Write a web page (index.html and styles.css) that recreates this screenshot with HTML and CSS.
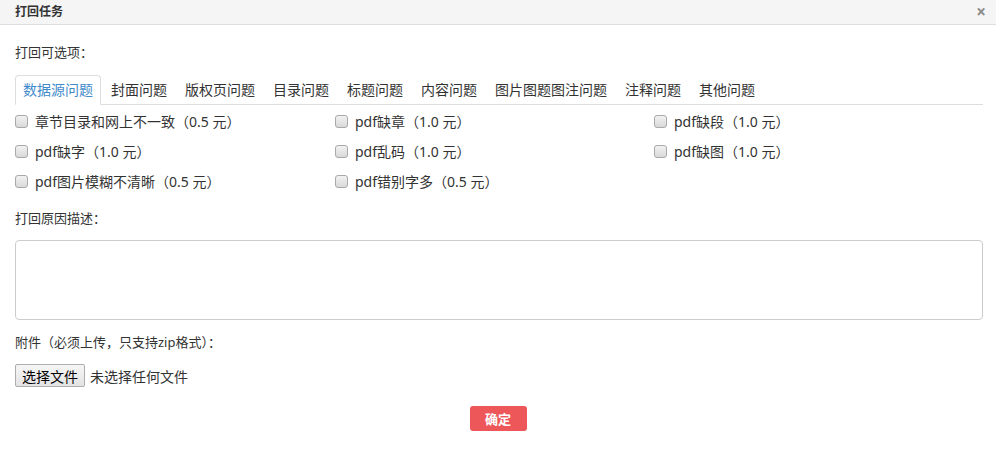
FILE: index.html
```html
<!DOCTYPE html>
<html lang="zh-CN">
<head>
<meta charset="utf-8">
<title>打回任务</title>
<link rel="stylesheet" href="styles.css">
</head>
<body>
<div class="dialog">
  <div class="dlg-head">
    <span class="dlg-title">打回任务</span>
    <span class="dlg-close">×</span>
  </div>
  <div class="dlg-body">
    <div class="label first">打回可选项：</div>
    <ul class="tabs">
      <li class="tab active">数据源问题</li>
      <li class="tab">封面问题</li>
      <li class="tab">版权页问题</li>
      <li class="tab">目录问题</li>
      <li class="tab">标题问题</li>
      <li class="tab">内容问题</li>
      <li class="tab">图片图题图注问题</li>
      <li class="tab">注释问题</li>
      <li class="tab">其他问题</li>
    </ul>
    <div class="opts">
      <label class="opt"><input type="checkbox" class="cb">章节目录和网上不一致（0.5 元）</label>
      <label class="opt"><input type="checkbox" class="cb">pdf缺章（1.0 元）</label>
      <label class="opt"><input type="checkbox" class="cb">pdf缺段（1.0 元）</label>
      <label class="opt"><input type="checkbox" class="cb">pdf缺字（1.0 元）</label>
      <label class="opt"><input type="checkbox" class="cb">pdf乱码（1.0 元）</label>
      <label class="opt"><input type="checkbox" class="cb">pdf缺图（1.0 元）</label>
      <label class="opt"><input type="checkbox" class="cb">pdf图片模糊不清晰（0.5 元）</label>
      <label class="opt"><input type="checkbox" class="cb">pdf错别字多（0.5 元）</label>
    </div>
    <div class="label">打回原因描述：</div>
    <textarea class="reason"></textarea>
    <div class="label">附件（必须上传，只支持zip格式）：</div>
    <div class="file">
      <button class="file-btn" type="button">选择文件</button>
      <span class="file-name">未选择任何文件</span>
    </div>
    <div class="actions">
      <button class="ok" type="button">确定</button>
    </div>
  </div>
</div>
</body>
</html>
```

FILE: styles.css
```css
* { box-sizing: border-box; }
html, body { margin: 0; padding: 0; background: #fff; }
body {
  font-family: "Noto Sans", "Noto Sans CJK SC", sans-serif;
  color: #333;
  font-size: 13px;
}
.dlg-head {
  height: 25px;
  background: #f5f5f5;
  border-bottom: 1px solid #ddd;
  display: flex;
  justify-content: space-between;
  align-items: center;
  padding: 0 10px 0 15px;
}
.dlg-title {
  font-size: 12px;
  font-weight: bold;
  color: #333;
  line-height: 24px;
}
.dlg-close {
  font-size: 17px;
  font-weight: bold;
  color: #8c8c8c;
  line-height: 24px;
}
.dlg-body {
  padding: 0 13px 0 15px;
}
.label {
  font-size: 13px;
  line-height: 20px;
  margin-top: 12px;
  color: #333;
}
.label.first { margin-top: 17px; }
.tabs {
  list-style: none;
  margin: 13px 0 0;
  padding: 0;
  display: flex;
  border-bottom: 1px solid #ddd;
}
.tab {
  font-size: 14px;
  line-height: 28px;
  padding: 0 7px;
  margin-right: 2px;
  margin-bottom: -1px;
  border: 1px solid transparent;
  border-radius: 4px 4px 0 0;
  color: #333;
  white-space: nowrap;
}
.tab.active {
  border-color: #ddd;
  border-bottom-color: #fff;
  background: #fff;
  color: #428bca;
}
.opts {
  display: grid;
  grid-template-columns: 320px 319px 1fr;
  margin-top: 1px;
}
.opt {
  display: flex;
  align-items: center;
  height: 30px;
  font-size: 14px;
  color: #333;
  white-space: nowrap;
}
.cb {
  -webkit-appearance: none;
  appearance: none;
  width: 13px;
  height: 13px;
  margin: 0 7px 0 0;
  border: 1px solid #a9a9a9;
  border-radius: 3px;
  background: linear-gradient(#f2f2f2, #d9d9d9);
  flex: none;
}
.reason {
  display: block;
  width: 100%;
  height: 80px;
  margin-top: 12px;
  border: 1px solid #ccc;
  border-radius: 4px;
  resize: none;
  font-family: inherit;
}
.file {
  margin-top: 12px;
  display: flex;
  align-items: center;
  height: 23px;
}
.file-btn {
  height: 23px;
  padding: 0 6px;
  font-family: "Noto Sans CJK SC", sans-serif;
  font-size: 14px;
  line-height: 20px;
  color: #000;
  border: 1px solid #adadad;
  border-radius: 2px;
  background: linear-gradient(#f6f6f6, #e3e3e3);
  margin-right: 5px;
}
.file-name {
  font-size: 14px;
  color: #333;
}
.actions {
  display: flex;
  justify-content: center;
  margin-top: 19px;
  margin-left: -15px;
  margin-right: -13px;
}
.ok {
  width: 57px;
  height: 25px;
  border: none;
  border-radius: 3px;
  background: #ee5759;
  color: #fff;
  font-family: "Noto Sans CJK SC", sans-serif;
  font-size: 13px;
  font-weight: bold;
  padding: 0;
}
```
